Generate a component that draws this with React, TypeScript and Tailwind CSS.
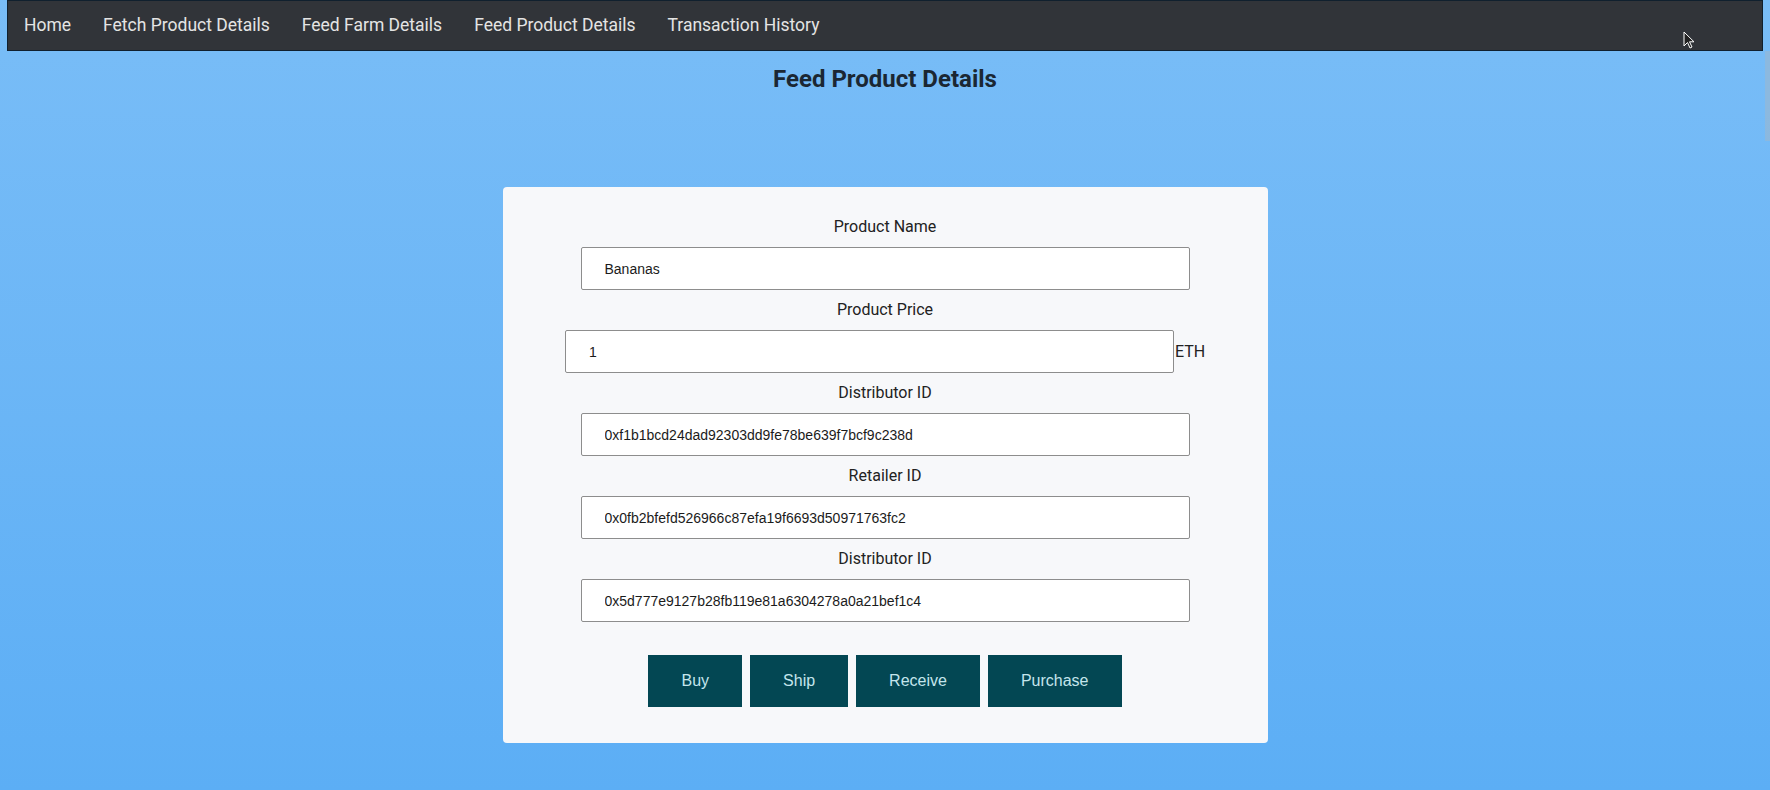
const NAV = ['Home', 'Fetch Product Details', 'Feed Farm Details', 'Feed Product Details', 'Transaction History']

const FIELDS = [
  { label: 'Distributor ID', value: '0xf1b1bcd24dad92303dd9fe78be639f7bcf9c238d' },
  { label: 'Retailer ID', value: '0x0fb2bfefd526966c87efa19f6693d50971763fc2' },
  { label: 'Distributor ID', value: '0x5d777e9127b28fb119e81a6304278a0a21bef1c4' },
]

const BUTTONS = ['Buy', 'Ship', 'Receive', 'Purchase']

const inputCls =
  "w-[609px] h-[43px] bg-white border border-[#8d8d8d] rounded-[2px] pl-[23px] text-[14px] text-[#1b1b1b] font-['Liberation_Sans',Arial,sans-serif] outline-none"

function Label({ children }: { children: React.ReactNode }) {
  return <p className="text-[16px] leading-[24px] text-[#222]">{children}</p>
}

export default function App() {
  return (
    <div className="relative min-h-[790px] w-full bg-gradient-to-b from-[#79bdf7] to-[#5caef5] font-['Roboto',sans-serif] overflow-hidden">
      {/* top nav */}
      <nav className="mx-[7px] h-[51px] bg-[#313439] border border-[#10202e] flex items-center">
        {NAV.map(n => (
          <a key={n} className="px-4 text-[17.5px] text-[#e4e4e4] cursor-pointer">{n}</a>
        ))}
      </nav>

      <h1 className="mt-[14px] text-center text-[24px] leading-[28px] font-bold text-[#1b2733]">Feed Product Details</h1>

      <div className="mx-auto mt-[94px] w-[765px] bg-[#f7f8fa] rounded-[4px] pt-[28px] pb-[36px] flex flex-col items-center">
        <div className="flex flex-col items-center gap-2">
          <Label>Product Name</Label>
          <input className={inputCls} defaultValue="Bananas" />
        </div>

        <div className="flex flex-col items-center gap-2 mt-2">
          <Label>Product Price</Label>
          <div className="flex items-center">
            <input className={inputCls} defaultValue="1" />
            <span className="ml-[1px] text-[16px] text-[#222]">ETH</span>
          </div>
        </div>

        {FIELDS.map((f, i) => (
          <div key={i} className="flex flex-col items-center gap-2 mt-2">
            <Label>{f.label}</Label>
            <input className={inputCls} defaultValue={f.value} />
          </div>
        ))}

        <div className="flex gap-2 mt-[33px]">
          {BUTTONS.map(b => (
            <button key={b} className="h-[52px] px-[33px] bg-[#034753] text-[#c4e5ec] text-[16px] font-['Liberation_Sans',Arial,sans-serif]">
              {b}
            </button>
          ))}
        </div>
      </div>

      {/* scrollbar strip */}
      <div className="absolute right-0 top-[51px] w-[5px] h-[90px] bg-[#9bb7cf] opacity-60" />

      {/* mouse cursor */}
      <svg className="absolute left-[1683px] top-[31px]" width="12" height="18" viewBox="0 0 12 18">
        <path d="M1 1 L1 15 L4.5 11.5 L7 17 L9 16 L6.5 10.8 L11 10.8 Z" fill="#222" stroke="#fff" strokeWidth="1" />
      </svg>
    </div>
  )
}
